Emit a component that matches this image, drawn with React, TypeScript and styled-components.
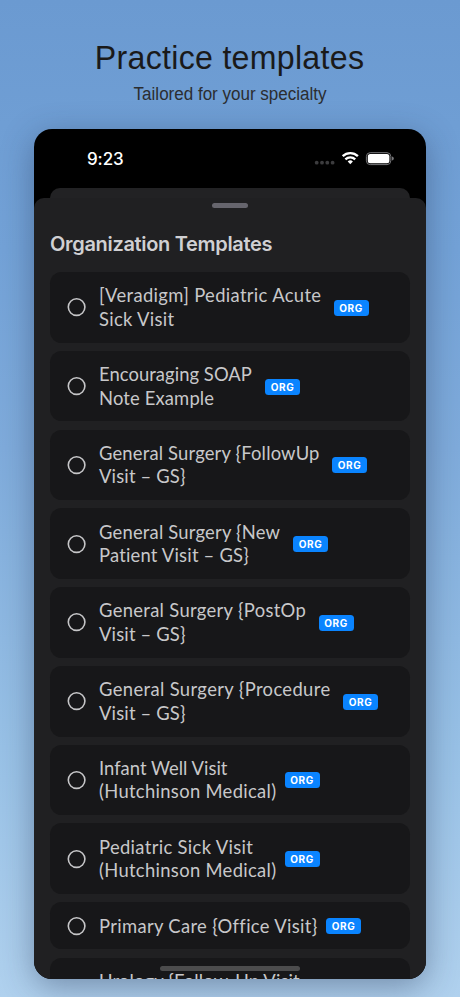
import React from "react";
import styled, { createGlobalStyle } from "styled-components";

const GlobalStyle = createGlobalStyle`
  * { box-sizing: border-box; }
  body { margin: 0; }
`;

const Page = styled.main`
  height: 997px;
  overflow: hidden;
  display: flex;
  flex-direction: column;
  align-items: center;
  background: linear-gradient(180deg, #6b9ad1 0%, #73a2d7 25%, #7fabdb 45%, #98c1e6 75%, #b0d1ee 100%);
  font-family: "Liberation Sans", Arial, sans-serif;
`;

const Title = styled.h1`
  margin: 37px 0 0;
  font-size: 34px;
  line-height: 40px;
  font-weight: 400;
  letter-spacing: 0.3px;
  transform: scaleX(0.945);
  color: #1a1a1a;
  white-space: nowrap;
`;

const Subtitle = styled.p`
  margin: 6px 0 0;
  font-size: 18px;
  line-height: 22px;
  transform: scaleX(0.945);
  color: #2b2d30;
  white-space: nowrap;
`;

const Phone = styled.section`
  position: relative;
  width: 392px;
  height: 850px;
  margin-top: 24px;
  flex: none;
  display: flex;
  flex-direction: column;
  overflow: hidden;
  border-radius: 18px;
  background: #000;
  box-shadow: 0 8px 32px rgba(35, 50, 80, 0.42);
`;

const StatusBar = styled.header`
  height: 59px;
  flex: none;
  display: flex;
  align-items: flex-start;
  justify-content: space-between;
  padding: 19px 32px 0 53px;
  color: #fff;
`;

const Clock = styled.time`
  margin-top: 1px;
  font: 500 17px/21px Inter, sans-serif;
  letter-spacing: -0.1px;
`;

const StatusIcons = styled.svg`
  width: 80px;
  height: 20px;
`;

const BackSheet = styled.div`
  height: 10px;
  flex: none;
  margin: 0 16px;
  border-radius: 10px 10px 0 0;
  background: #222224;
`;

const Sheet = styled.div`
  flex: 1;
  min-height: 0;
  overflow: hidden;
  padding: 5px 16px 0;
  border-radius: 10px 10px 0 0;
  background: #202022;
`;

const Grabber = styled.div`
  width: 36px;
  height: 5px;
  margin: 0 auto;
  border-radius: 3px;
  background: #66656d;
`;

const SectionTitle = styled.h2`
  margin: 23px 0 15px;
  font: 600 20px/26px Inter, sans-serif;
  letter-spacing: -0.32px;
  color: #d0d0d3;
  white-space: nowrap;
`;

const List = styled.ul`
  list-style: none;
  margin: 0;
  padding: 0;
  display: flex;
  flex-direction: column;
  gap: 8.2px;
`;

const Card = styled.li`
  flex: none;
  display: flex;
  align-items: center;
  padding: 12.3px 16.5px 11.3px;
  border-radius: 11.5px;
  background: #171719;
`;

const Radio = styled.svg`
  flex: none;
  width: 19px;
  height: 19px;
  margin-right: 13.5px;
`;

const Name = styled.span<{ $width: number }>`
  flex: none;
  display: flex;
  flex-direction: column;
  width: ${(p) => p.$width}px;
  font: 400 18.4px/23.5px Lato, sans-serif;
  color: #c8c8ca;
  white-space: nowrap;
`;

const Line = styled.span<{ $spacing: number }>`
  letter-spacing: ${(p) => p.$spacing}px;
`;

const Badge = styled.span`
  flex: none;
  width: 35px;
  height: 16px;
  display: flex;
  align-items: center;
  justify-content: center;
  border-radius: 3.5px;
  background: #0a84ff;
  color: #fff;
  font: 700 10px/16px Inter, sans-serif;
  letter-spacing: 0.5px;
`;

const HomeIndicator = styled.div`
  position: absolute;
  left: 126px;
  bottom: 8px;
  width: 140px;
  height: 5px;
  border-radius: 3px;
  background: #4c4c4d;
`;

type Template = { lines: [string, number][]; width: number };

const templates: Template[] = [
  { lines: [["[Veradigm] Pediatric Acute", 0.34], ["Sick Visit", 0.3]], width: 234.5 },
  { lines: [["Encouraging SOAP", 0.06], ["Note Example", 0.15]], width: 166 },
  { lines: [["General Surgery {FollowUp", 0.17], ["Visit – GS}", 0.16]], width: 233 },
  { lines: [["General Surgery {New", 0.2], ["Patient Visit – GS}", 0.2]], width: 194 },
  { lines: [["General Surgery {PostOp", 0.32], ["Visit – GS}", 0.16]], width: 219.5 },
  { lines: [["General Surgery {Procedure", 0.37], ["Visit – GS}", 0.16]], width: 244 },
  { lines: [["Infant Well Visit", 0.02], ["(Hutchinson Medical)", 0.32]], width: 185.5 },
  { lines: [["Pediatric Sick Visit", 0.34], ["(Hutchinson Medical)", 0.32]], width: 185.5 },
  { lines: [["Primary Care {Office Visit}", 0.33]], width: 227 },
  { lines: [["Urology {Follow-Up Visit", 0.15], ["– GS}", 0.15]], width: 214 },
];

export default function App() {
  return (
    <>
      <GlobalStyle />
      <Page>
        <Title>Practice templates</Title>
        <Subtitle>Tailored for your specialty</Subtitle>
        <Phone>
          <StatusBar>
            <Clock>9:23</Clock>
            <StatusIcons viewBox="0 0 80 20" fill="none">
              <g fill="#3c3c3e">
                <circle cx="2.7" cy="14.7" r="1.9" />
                <circle cx="8" cy="14.7" r="1.9" />
                <circle cx="13.3" cy="14.7" r="1.9" />
                <circle cx="18.6" cy="14.7" r="1.9" />
              </g>
              <g stroke="#fff" strokeWidth="2.4">
                <path d="M28.7 8.2a11 11 0 0 1 15.2 0" />
                <path d="M31.4 11.3a7.1 7.1 0 0 1 9.8 0" />
              </g>
              <path d="M33.7 13.5a3.9 3.9 0 0 1 5.2 0L36.3 16.3z" fill="#fff" />
              <rect x="52.4" y="4.7" width="24.4" height="11.9" rx="3.8" stroke="#77777a" strokeWidth="1" />
              <rect x="53.8" y="6" width="21.6" height="9.3" rx="2.5" fill="#fff" />
              <path d="M77.8 8.6a2 2 0 0 1 0 4z" fill="#77777a" />
            </StatusIcons>
          </StatusBar>
          <BackSheet />
          <Sheet>
            <Grabber />
            <SectionTitle>Organization Templates</SectionTitle>
            <List>
              {templates.map((t) => (
                <Card key={t.lines[0][0]}>
                  <Radio viewBox="0 0 19 19" fill="none" stroke="#c6c6c8" strokeWidth="1.6">
                    <circle cx="9.6" cy="9.1" r="8.3" />
                  </Radio>
                  <Name $width={t.width}>
                    {t.lines.map(([text, spacing]) => (
                      <Line key={text} $spacing={spacing}>{text}</Line>
                    ))}
                  </Name>
                  <Badge>ORG</Badge>
                </Card>
              ))}
            </List>
          </Sheet>
          <HomeIndicator />
        </Phone>
      </Page>
    </>
  );
}
